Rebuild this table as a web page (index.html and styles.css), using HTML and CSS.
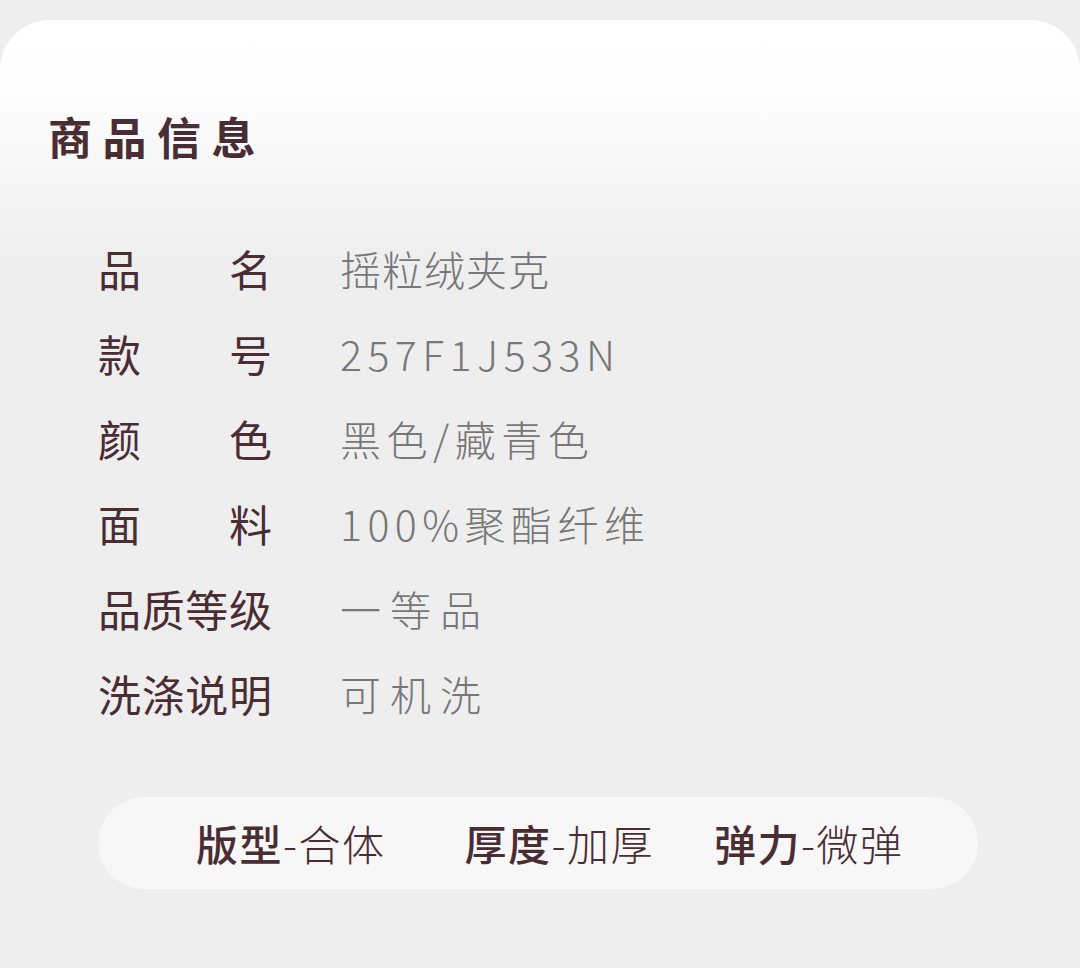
FILE: index.html
```html
<!DOCTYPE html>
<html>
<head>
    <title>商品信息</title>
    <meta name="viewport" content="width=device-width, initial-scale=1.0">
    <link rel="stylesheet" href="styles.css">
</head>
<body>
    <div class="card">
        <h2 class="card-title">商品信息</h2>

        <div class="info-list">
            <div class="info-row">
                <span class="info-label">品名</span>
                <span class="info-value tight">摇粒绒夹克</span>
            </div>
            <div class="info-row">
                <span class="info-label">款号</span>
                <span class="info-value">257F1J533N</span>
            </div>
            <div class="info-row">
                <span class="info-label">颜色</span>
                <span class="info-value">黑色/藏青色</span>
            </div>
            <div class="info-row">
                <span class="info-label">面料</span>
                <span class="info-value">100%聚酯纤维</span>
            </div>
            <div class="info-row">
                <span class="info-label">品质等级</span>
                <span class="info-value wide">一等品</span>
            </div>
            <div class="info-row">
                <span class="info-label">洗涤说明</span>
                <span class="info-value wide">可机洗</span>
            </div>
        </div>

        <div class="feature-bar">
            <span class="feature"><b>版型</b>-合体</span>
            <span class="feature"><b>厚度</b>-加厚</span>
            <span class="feature"><b>弹力</b>-微弹</span>
        </div>
    </div>
</body>
</html>
```

FILE: styles.css
```css
/* 基础样式 */
body {
    margin: 0;
    padding: 0;
    background-color: #eeeeee;
    font-family: "Noto Sans CJK SC", "Noto Sans", sans-serif;
}

.card {
    margin-top: 20px;
    min-height: 948px;
    border-radius: 50px 50px 0 0;
    background: linear-gradient(180deg, #ffffff 0, #fefefe 60px, #eeeeee 240px);
    padding-top: 86px;
    box-sizing: border-box;
}

.card-title {
    margin: 0;
    padding-left: 48px;
    font-size: 44px;
    line-height: 60px;
    font-weight: 700;
    letter-spacing: 10.5px;
    color: #4a2c33;
}

/* 信息列表 */
.info-list {
    margin-top: 59px;
    padding-left: 98px;
}

.info-row {
    display: grid;
    grid-template-columns: 174px 1fr;
    column-gap: 68px;
    height: 85px;
    align-items: center;
}

.info-label {
    font-size: 43px;
    line-height: 60px;
    color: #4a2c33;
    text-align: justify;
    text-align-last: justify;
}

.info-value {
    font-size: 41px;
    line-height: 60px;
    font-weight: 300;
    color: #777777;
    letter-spacing: 5.5px;
}

.info-value.tight {
    letter-spacing: 1px;
}

.info-value.wide {
    letter-spacing: 9px;
}

/* 底部特征 */
.feature-bar {
    display: flex;
    align-items: center;
    gap: 79px;
    margin: 62px 102px 0 98px;
    height: 92px;
    padding-left: 98px;
    border-radius: 46px;
    background: #f7f7f7;
}

.feature {
    font-size: 42px;
    line-height: 60px;
    font-weight: 300;
    letter-spacing: 1.5px;
    color: #4a2c33;
}

.feature b {
    font-weight: 500;
}

.feature + .feature + .feature {
    margin-left: -19px;
}
```
